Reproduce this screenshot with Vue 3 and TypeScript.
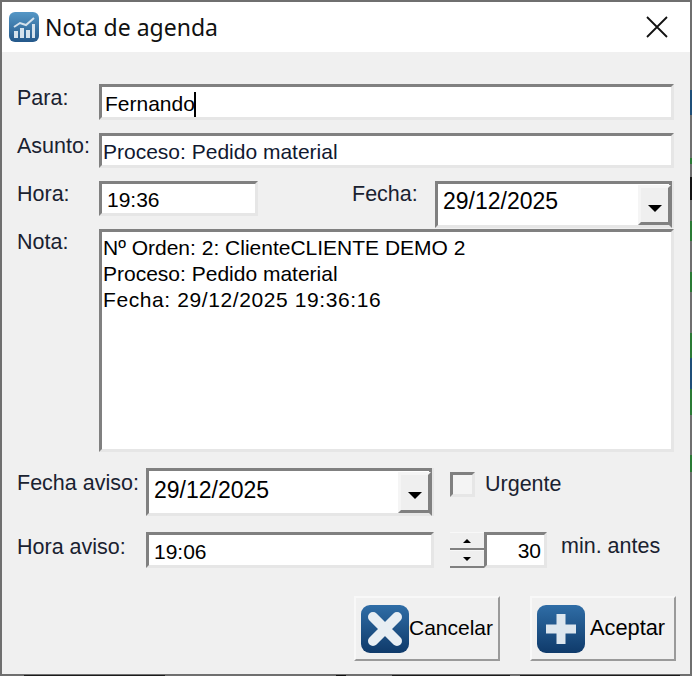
<script setup lang="ts">
import { ref } from 'vue'

const nota = ref([
  { text: 'Nº Orden: 2: ClienteCLIENTE DEMO 2', cls: '' },
  { text: 'Proceso: Pedido material', cls: '' },
  { text: 'Fecha: 29/12/2025 19:36:16', cls: 'wide' },
])
</script>

<template>
  <div class="desktop">
    <div class="window">
      <div class="titlebar">
        <svg class="app-icon" width="30" height="30" viewBox="0 0 30 30">
          <defs>
            <linearGradient id="appGrad" x1="0" y1="0" x2="0" y2="1">
              <stop offset="0" stop-color="#5597c6" />
              <stop offset="1" stop-color="#24588a" />
            </linearGradient>
          </defs>
          <rect width="30" height="30" rx="6" fill="url(#appGrad)" />
          <g fill="#d5e2ec">
            <rect x="5" y="19" width="4" height="7" />
            <rect x="11" y="16" width="4" height="10" />
            <rect x="17" y="18" width="4" height="8" />
            <rect x="23" y="12" width="3" height="14" />
          </g>
          <path d="M5 15 L11 11 L17 13 L25 6" fill="none" stroke="#d5e2ec" stroke-width="2" />
        </svg>
        <span class="title">Nota de agenda</span>
        <svg class="close" width="22" height="22" viewBox="0 0 22 22">
          <path d="M1 1 L21 21 M21 1 L1 21" stroke="#111" stroke-width="1.8" fill="none" />
        </svg>
      </div>

      <div class="form">
        <div class="row r-para">
          <label class="lbl lbl-para">Para:</label>
          <div class="field grow fernando">Fernando<span class="caret"></span></div>
        </div>
        <div class="row r-asunto">
          <label class="lbl">Asunto:</label>
          <div class="field grow asunto">Proceso: Pedido material</div>
        </div>
        <div class="row r-hora">
          <label class="lbl">Hora:</label>
          <div class="field hora">19:36</div>
          <label class="lbl fecha-lbl">Fecha:</label>
          <div class="field combo fecha">
            <span class="combo-text">29/12/2025</span>
            <span class="drop"><i class="arrow"></i></span>
          </div>
        </div>
        <div class="row r-nota">
          <label class="lbl">Nota:</label>
          <div class="field grow memo">
            <div v-for="line in nota" :key="line.text" :class="line.cls">{{ line.text }}</div>
          </div>
        </div>
        <div class="row r-aviso">
          <label class="lbl lbl-wide">Fecha aviso:</label>
          <div class="field combo aviso">
            <span class="combo-text">29/12/2025</span>
            <span class="drop"><i class="arrow"></i></span>
          </div>
          <span class="check"></span>
          <span class="check-lbl">Urgente</span>
        </div>
        <div class="row r-horaviso">
          <label class="lbl lbl-wide">Hora aviso:</label>
          <div class="field aviso-input">19:06</div>
          <div class="spin">
            <span class="spin-btn"><i class="mini up"></i></span>
            <span class="spin-btn"><i class="mini down"></i></span>
          </div>
          <div class="field mins">30</div>
          <span class="mins-lbl">min. antes</span>
        </div>
        <div class="row r-buttons">
          <button class="btn">
            <svg width="48" height="48" viewBox="0 0 48 48">
              <defs>
                <linearGradient id="btnGrad" x1="0" y1="0" x2="0" y2="1">
                  <stop offset="0" stop-color="#2f6da6" />
                  <stop offset="1" stop-color="#0f3a6a" />
                </linearGradient>
              </defs>
              <rect width="48" height="48" rx="9" fill="url(#btnGrad)" />
              <path d="M12 12 L36 36 M36 12 L12 36" stroke="#e8eef3" stroke-width="10" stroke-linecap="round" fill="none" />
            </svg>
            <span class="btn-text">Cancelar</span>
          </button>
          <button class="btn accept">
            <svg width="48" height="48" viewBox="0 0 48 48">
              <rect width="48" height="48" rx="9" fill="url(#btnGrad)" />
              <path d="M24 9 V39 M9 24 H39" stroke="#dde6ee" stroke-width="9" fill="none" />
            </svg>
            <span class="btn-text">Aceptar</span>
          </button>
        </div>
      </div>
    </div>
  </div>
</template>

<style>
body {
  background: #6f6f6f;
  overflow: hidden;
}
</style>

<style scoped>
/* what shows of the app behind the dialog, right and bottom edges only */
.desktop {
  width: 692px;
  height: 676px;
  background-color: #6f6f6f;
  background-image:
    linear-gradient(to bottom,
      #6f6f6f 90px, #1f4f78 90px, #1f4f78 115px, #6f6f6f 115px,
      #6f6f6f 158px, #2b7a35 158px, #2b7a35 164px, #6f6f6f 164px,
      #6f6f6f 177px, #141414 177px, #141414 200px, #6f6f6f 200px,
      #6f6f6f 221px, #2b7a35 221px, #2b7a35 241px, #6f6f6f 241px,
      #6f6f6f 272px, #2b7a35 272px, #2b7a35 292px, #6f6f6f 292px,
      #6f6f6f 333px, #2b7a35 333px, #2b7a35 358px, #1f4f78 358px, #1f4f78 389px, #2b7a35 389px, #2b7a35 415px, #6f6f6f 415px,
      #6f6f6f 455px, #2b7a35 455px, #2b7a35 472px, #6f6f6f 472px),
    linear-gradient(to right,
      #6f6f6f 24px, #1c1c1c 24px, #1c1c1c 165px, #6f6f6f 165px,
      #6f6f6f 336px, #111 336px, #111 346px, #6f6f6f 346px,
      #6f6f6f 392px, #1c1c1c 392px, #1c1c1c 510px, #6f6f6f 510px,
      #6f6f6f 520px, #1c1c1c 520px, #1c1c1c 680px, #6f6f6f 680px);
  background-size: 2px 100%, 100% 1px;
  background-position: right top, left bottom;
  background-repeat: no-repeat;
}

.window {
  width: 690px;
  height: 674px;
  box-sizing: border-box;
  border-left: 2px solid #6f6f6f;
  border-top: 2px solid #6f6f6f;
  background: #f0f0f0;
  font-family: "Liberation Sans", Arial, sans-serif;
  font-size: 21px;
  color: #000;
}

.titlebar {
  height: 50px;
  background: #fff;
  display: flex;
  align-items: center;
  padding-left: 7px;
  padding-right: 22px;
}

.app-icon {
  flex: none;
  margin-right: 6px;
}

.title {
  font-family: "Noto Sans", sans-serif;
  font-size: 23px;
  flex: 1;
  color: #111;
}

.form {
  padding: 32px 16px 0 15px;
}

.row {
  display: flex;
  align-items: flex-start;
}

.r-para {
  height: 36px;
  margin-bottom: 13px;
}

.r-asunto {
  height: 35px;
  margin-bottom: 13px;
}

.r-hora {
  height: 47px;
  margin-bottom: 1px;
}

.r-nota {
  height: 223px;
  margin-bottom: 16px;
}

.r-aviso {
  height: 48px;
  margin-bottom: 16px;
}

.r-horaviso {
  height: 36px;
  margin-bottom: 28px;
}

.r-buttons {
  height: 65px;
  justify-content: flex-end;
  gap: 30px;
  margin-right: -2px;
}

.lbl {
  width: 82px;
  flex: none;
  font-size: 21.5px;
  line-height: 26px;
  color: #1a2230;
}

.lbl-para {
  line-height: 28px;
}

.lbl-wide {
  width: 129px;
  line-height: 30px;
}

.fecha-lbl {
  width: 83px;
  margin-left: 94px;
}

.field {
  box-sizing: border-box;
  border: 3px solid;
  border-color: #808080 #e6e6e6 #e6e6e6 #808080;
  background: #fff;
  padding: 0 3px;
  height: 100%;
  line-height: 32px;
  white-space: nowrap;
}

.grow {
  flex: 1;
}

.fernando {
  display: flex;
  align-items: center;
  padding-top: 4px;
}

.asunto {
  padding-left: 1px;
  color: #101830;
}

.caret {
  width: 2px;
  height: 25px;
  background: #000;
  margin-left: -1px;
}

.hora {
  width: 159px;
  height: 35px;
  padding-left: 5px;
}

.fecha {
  width: 237px;
}

.combo {
  display: flex;
  justify-content: space-between;
  padding: 0 0 0 5px;
  border-right-color: #808080;
  box-shadow: 2px 0 0 #e6e6e6;
}

.combo-text {
  font-size: 23px;
  line-height: 34px;
}

.r-aviso .combo-text {
  line-height: 38px;
}

.drop {
  width: 33px;
  box-sizing: border-box;
  margin: 1px -2px 0 0;
  background: #efefef;
  border: 3px solid;
  border-color: #f5f5f5 #808080 #808080 #f5f5f5;
  display: flex;
  align-items: center;
  justify-content: center;
}

.arrow {
  width: 0;
  height: 0;
  border-left: 7px solid transparent;
  border-right: 7px solid transparent;
  border-top: 7px solid #000;
  margin-top: 6px;
}

.memo {
  line-height: 26px;
  padding-top: 3px;
  padding-left: 1px;
}

.wide {
  letter-spacing: 0.6px;
}

.aviso {
  width: 286px;
  margin-right: 2px;
}

.aviso-input {
  width: 288px;
  padding-left: 5px;
  line-height: 34px;
}

.check {
  width: 25px;
  height: 25px;
  box-sizing: border-box;
  border: 3px solid;
  border-color: #808080 #e6e6e6 #e6e6e6 #808080;
  background: #f4f4f4;
  margin: 4px 0 0 16px;
  flex: none;
}

.check-lbl {
  margin-left: 10px;
  font-size: 21.5px;
  line-height: 32px;
  color: #1a2230;
}

.spin {
  width: 34px;
  height: 36px;
  margin-left: 16px;
  display: flex;
  flex-direction: column;
  flex: none;
}

.spin-btn {
  flex: 1;
  background: #efefef;
  border-top: 1px solid #f8f8f8;
  border-bottom: 2px solid #808080;
  display: flex;
  align-items: center;
  justify-content: center;
}

.mini {
  width: 0;
  height: 0;
  border-left: 4px solid transparent;
  border-right: 4px solid transparent;
}

.mini.up {
  border-bottom: 4px solid #000;
}

.mini.down {
  border-top: 4px solid #000;
}

.mins {
  width: 63px;
  text-align: right;
  padding-right: 3px;
}

.mins-lbl {
  margin-left: 14px;
  font-size: 21.5px;
  line-height: 28px;
  color: #1a2230;
}

.btn {
  width: 146px;
  height: 65px;
  box-sizing: border-box;
  border: 2px solid;
  border-color: #f8f8f8 #9a9a9a #9a9a9a #f8f8f8;
  background: #f0f0f0;
  padding: 0 0 0 5px;
  display: flex;
  align-items: center;
  font-family: inherit;
  font-size: 21px;
  color: #000;
}

.btn svg {
  flex: none;
}

.btn-text {
  margin-bottom: 2px;
}

.accept .btn-text {
  margin-left: 5px;
  font-size: 21.8px;
}
</style>
